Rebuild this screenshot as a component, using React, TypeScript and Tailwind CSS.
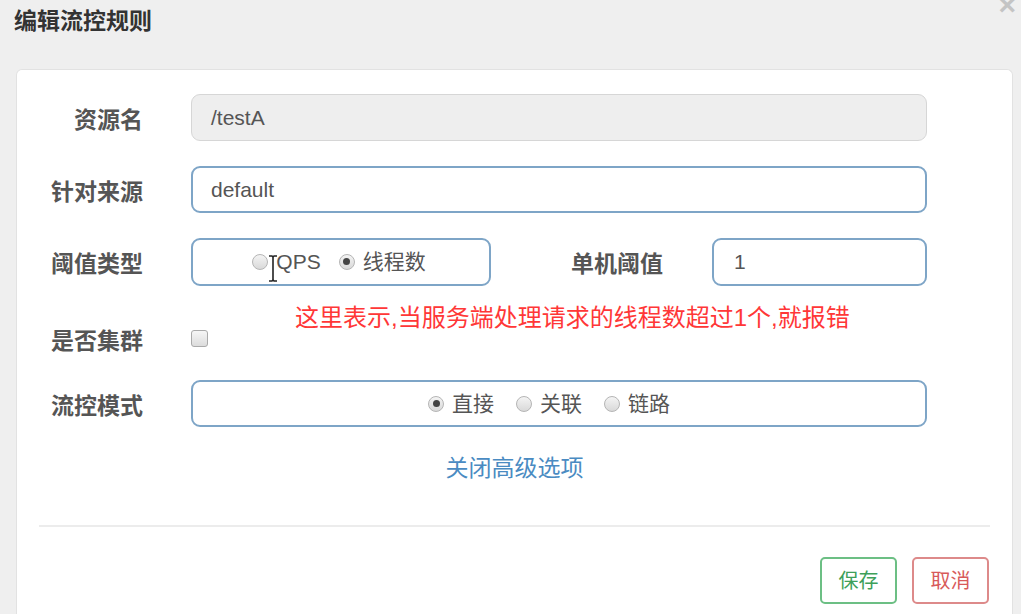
import React from 'react';

const font = { fontFamily: '"Liberation Sans", "Noto Sans CJK SC", sans-serif' };

function Radio({ checked, label }: { checked?: boolean; label: string }) {
  return (
    <span className="inline-flex items-center gap-[8px]">
      <span className="flex h-[16px] w-[16px] items-center justify-center rounded-full border border-[#b5b5b5] bg-gradient-to-b from-[#f4f4f4] to-[#d9d9d9]">
        {checked ? <span className="h-[7px] w-[7px] rounded-full bg-[#444]" /> : null}
      </span>
      <span>{label}</span>
    </span>
  );
}

function Label({ children }: { children: React.ReactNode }) {
  return (
    <div className="w-[126px] shrink-0 pt-[6px] text-right text-[23px] font-bold text-[#555]">{children}</div>
  );
}

export default function App() {
  return (
    <div style={font} className="relative flex h-[614px] w-[1021px] flex-col overflow-hidden bg-[#efefef]">
      {/* header */}
      <div className="h-[69px] shrink-0 pl-[14px] pt-[6px] text-[23px] font-bold leading-[30px] text-[#333]">
        编辑流控规则
      </div>
      <span className="absolute right-[5px] top-[-10px] text-[30px] font-bold leading-[30px] text-[#c4c4c4]">×</span>

      {/* panel */}
      <div className="ml-[16px] mr-[8px] flex-1 rounded-t-[6px] border border-b-0 border-[#e2e2e2] bg-white">
        <div className="flex flex-col gap-[25px] pt-[24px]">
          {/* 资源名 */}
          <div className="flex h-[47px] items-center gap-[48px]">
            <Label>资源名</Label>
            <div className="flex h-[47px] w-[736px] items-center rounded-[9px] border border-[#d6d6d6] bg-[#eeeeee] px-[19px] text-[21px] text-[#555]">
              /testA
            </div>
          </div>

          {/* 针对来源 */}
          <div className="flex h-[47px] items-center gap-[48px]">
            <Label>针对来源</Label>
            <div className="flex h-[47px] w-[736px] items-center rounded-[9px] border-2 border-[#7ea5c7] bg-white px-[18px] text-[21px] text-[#555]">
              default
            </div>
          </div>

          {/* 阈值类型 + 单机阈值 */}
          <div className="flex h-[47px] items-center gap-[48px]">
            <Label>阈值类型</Label>
            <div className="relative flex h-[48px] w-[300px] items-center justify-center gap-[18px] rounded-[9px] border-2 border-[#7ea5c7] bg-white pr-[4px] text-[21px] text-[#555]">
              <Radio label="QPS" />
              <Radio checked label="线程数" />
              {/* text cursor */}
              <svg className="absolute left-[75px] top-[15px]" width="10" height="27" viewBox="0 0 10 27">
                <path d="M1 1h3l1 1 1-1h3M5 2v23M1 26h3l1-1 1 1h3" fill="none" stroke="#222" strokeWidth="1.6" />
              </svg>
            </div>
            <div className="ml-[32px] w-[95px] pt-[6px] text-[23px] font-bold text-[#555]">单机阈值</div>
            <div className="ml-[-2px] flex h-[48px] w-[215px] items-center rounded-[9px] border-2 border-[#7ea5c7] bg-white px-[20px] text-[21px] text-[#555]">
              1
            </div>
          </div>

          {/* 是否集群 */}
          <div className="flex h-[45px] items-center gap-[48px] pt-[12px]">
            <Label>是否集群</Label>
            <span className="h-[17px] w-[17px] rounded-[3px] border border-[#aaa] bg-gradient-to-b from-[#f6f6f6] to-[#dcdcdc]" />
          </div>

          {/* 流控模式 */}
          <div className="flex h-[47px] items-center gap-[48px]">
            <Label>流控模式</Label>
            <div className="flex h-[47px] w-[736px] items-center justify-center gap-[22px] rounded-[9px] border-2 border-[#7ea5c7] bg-white pr-[20px] text-[21px] text-[#555]">
              <Radio checked label="直接" />
              <Radio label="关联" />
              <Radio label="链路" />
            </div>
          </div>
        </div>

        <div className="mt-[26px] text-center text-[23px] leading-[30px] text-[#4a8bc2]">关闭高级选项</div>

        <div className="mx-[22px] mt-[42px] h-[2px] bg-[#ececec]" />

        <div className="mr-[23px] mt-[30px] flex justify-end gap-[15px]">
          <button className="h-[47px] w-[77px] rounded-[5px] border-2 border-[#6cbf84] bg-white text-[20px] text-[#3e9f5a]">
            保存
          </button>
          <button className="h-[47px] w-[77px] rounded-[5px] border-2 border-[#dd8a8a] bg-white text-[20px] text-[#d85a5a]">
            取消
          </button>
        </div>
      </div>

      {/* annotation overlay */}
      <div className="absolute left-[295px] top-[304px] text-[24px] leading-[28px] text-[#ff3737]">
        这里表示,当服务端处理请求的线程数超过1个,就报错
      </div>
    </div>
  );
}
